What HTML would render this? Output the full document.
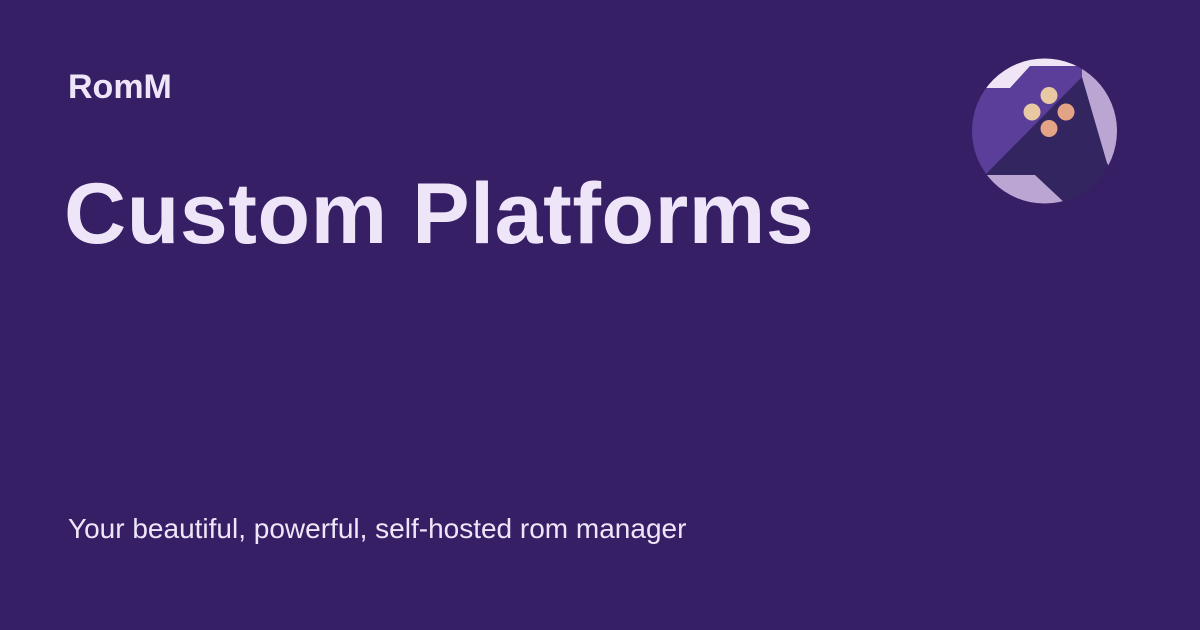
<!DOCTYPE html>
<html><head><meta charset="utf-8"><style>
html,body{margin:0;padding:0}
body{width:1200px;height:630px;background:#371f66;position:relative;overflow:hidden;font-family:"Liberation Sans",sans-serif;color:#eee6f8}
.t{position:absolute;white-space:nowrap;line-height:1}
</style></head><body>
<div class="t" style="left:68px;top:70px;font-size:34px;font-weight:bold">RomM</div>
<div class="t" style="left:64px;top:171px;font-size:86px;font-weight:bold;letter-spacing:0.6px">Custom Platforms</div>
<div class="t" style="left:68px;top:515px;font-size:28px">Your beautiful, powerful, self-hosted rom manager</div>
<svg style="position:absolute;left:0;top:0" width="1200" height="630">
<defs><clipPath id="c"><circle cx="1044.5" cy="131" r="72.5"/></clipPath></defs>
<g clip-path="url(#c)">
<rect x="960" y="50" width="170" height="170" fill="#332560"/>
<polygon points="960,50 1082,50 1082,77 987,173 960,200" fill="#5a3e99"/>
<polygon points="960,50 1082,50 1082,66 1030,66 1010,88 960,88" fill="#efe5f5"/>
<polygon points="1082,50 1130,50 1130,200 1107,163 1082,77" fill="#bba5d3"/>
<polygon points="960,175 1035,175 1067,205 1067,220 960,220" fill="#bba5d3"/>
</g>
<circle cx="1049" cy="95.5" r="8.5" fill="#e8c9a3"/>
<circle cx="1032" cy="112" r="8.5" fill="#e8c9a3"/>
<circle cx="1066" cy="112" r="8.5" fill="#e3a486"/>
<circle cx="1049" cy="128.5" r="8.5" fill="#e3a486"/>
</svg>
</body></html>
